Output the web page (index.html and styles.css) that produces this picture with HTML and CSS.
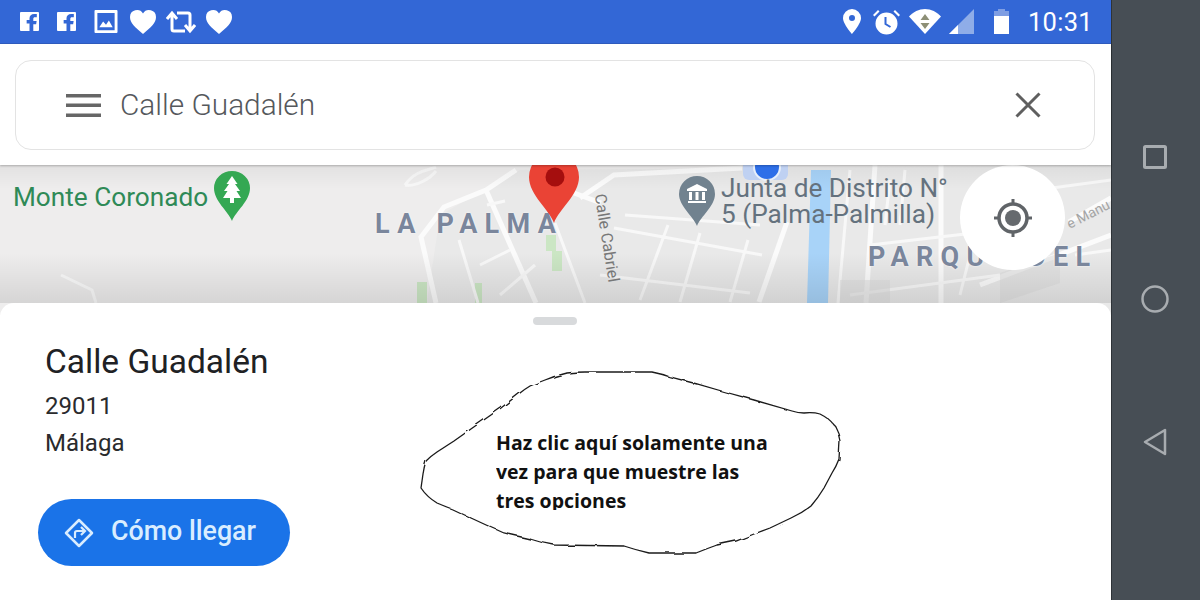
FILE: index.html
```html
<!DOCTYPE html>
<html lang="es">
<head>
<meta charset="utf-8">
<title>Calle Guadalén</title>
<link rel="stylesheet" href="styles.css">
</head>
<body>
<div class="screen">
  <main class="phone">
    <header class="status">
      <div class="status-group left">
        <svg class="i19" viewBox="0 0 20 20"><path fill="#fff" d="M1 0h18a1 1 0 0 1 1 1v18a1 1 0 0 1-1 1h-5v-7h3l.5-3.5H14V7c0-1 .5-1.6 1.7-1.6h2V2.2C17 2.1 16 2 14.800 2 12 2 10 3.700 10 6.600v1.900H7V12h3v8H1a1 1 0 0 1-1-1V1a1 1 0 0 1 1-1z"/></svg>
        <svg class="i19 gap17" viewBox="0 0 20 20"><path fill="#fff" d="M1 0h18a1 1 0 0 1 1 1v18a1 1 0 0 1-1 1h-5v-7h3l.5-3.5H14V7c0-1 .5-1.6 1.7-1.6h2V2.2C17 2.1 16 2 14.800 2 12 2 10 3.700 10 6.600v1.900H7V12h3v8H1a1 1 0 0 1-1-1V1a1 1 0 0 1 1-1z"/></svg>
        <svg class="i24 gap17" viewBox="0 0 24 24"><path fill="#fff" fill-rule="evenodd" d="M1 0h22a1 1 0 0 1 1 1v22a1 1 0 0 1-1 1H1a1 1 0 0 1-1-1V1a1 1 0 0 1 1-1zm2 3v18h18V3H3zm2 15 4-6 3 3.500 3-4.500 4 7H5z"/></svg>
        <svg class="heart gap12" viewBox="0 0 26 24"><path fill="#fff" d="M13 24C5 17 0 13 0 7a7 7 0 0 1 13-3.500A7 7 0 0 1 26 7c0 6-5 10-13 17z"/></svg>
        <svg class="retweet gap9" viewBox="0 0 30 24" fill="none" stroke="#fff" stroke-width="3"><path d="M6 4v15a2 2 0 0 0 2 2h11M1 9l5-6 5 6"/><path d="M24 20V5a2 2 0 0 0-2-2H11M29 15l-5 6-5-6"/></svg>
        <svg class="heart gap9" viewBox="0 0 26 24"><path fill="#fff" d="M13 24C5 17 0 13 0 7a7 7 0 0 1 13-3.500A7 7 0 0 1 26 7c0 6-5 10-13 17z"/></svg>
      </div>
      <div class="status-group right">
        <svg class="st-pin" viewBox="0 0 18 25"><path fill="#fff" fill-rule="evenodd" d="M9 0a9 9 0 0 1 9 9c0 6-9 16-9 16S0 15 0 9a9 9 0 0 1 9-9zm0 6a3 3 0 1 0 0 6 3 3 0 0 0 0-6z"/></svg>
        <svg class="st-alarm" viewBox="0 0 27 26"><path fill="#fff" d="M13.500 3.500a11 11 0 1 1 0 22 11 11 0 0 1 0-22zM0 6l5-5 1.500 1.500-5 5zM27 6l-5-5-1.500 1.500 5 5z"/><path fill="none" stroke="#3367d6" stroke-width="2" d="M12.500 8v7l5 3"/></svg>
        <svg class="st-wifi" viewBox="0 0 32 25"><path fill="#fff" d="M16 25 0 7.500C4 3 10 0 16 0s12 3 16 7.500z"/><path fill="#8d8f76" d="M16 5l4.500 6h-9zM16 20l-4.500-6h9z"/></svg>
        <svg class="st-signal" viewBox="0 0 25 25"><path fill="#8fade8" d="M25 0v25H0z"/><path fill="#fff" d="M9 16v9H0z"/></svg>
        <svg class="st-battery" viewBox="0 0 15 25"><path fill="#7f9ee3" d="M4 0h7v2h4v6H0V2h4z"/><path fill="#fff" d="M0 7h15v18H0z"/></svg>
        <span class="clock">10:31</span>
      </div>
    </header>

    <div class="search-wrap">
      <div class="search">
        <svg class="menu" viewBox="0 0 35 23"><path fill="#666" d="M0 0h35v3.500H0zM0 9.500h35V13H0zM0 19.500h35V23H0z"/></svg>
        <span class="query">Calle Guadalén</span>
        <svg class="close" viewBox="0 0 26 26"><path fill="none" stroke="#5f5f5f" stroke-width="3" d="M1.500 1.500l23 23M24.500 1.500l-23 23"/></svg>
      </div>
    </div>

    <section class="map">
      <svg class="roads" viewBox="0 0 1111 150" preserveAspectRatio="none">
        <rect x="0" y="0" width="1111" height="150" fill="#eeeded"/>
        <path fill="#e9e9e9" d="M440 50 520 5 1111 0v150H425z"/>
        <g fill="#cbe6c4">
          <rect x="546" y="70" width="10" height="16"/>
          <rect x="552" y="86" width="10" height="20"/>
          <rect x="417" y="117" width="10" height="21"/>
          <rect x="475" y="118" width="7" height="20"/>
        </g>
        <path fill="#a8d3f8" d="M811 5h20l-3 133h-21z"/>
        <g fill="none" stroke="#fbfbfb" stroke-width="5">
          <path d="M516 5 486 25 444 42 421 72 436 138"/>
          <path d="M486 25 536 138"/>
          <path d="M574 28 601 38"/>
          <path d="M580 33 614 10 742 3"/>
          <path d="M787 57 759 137"/>
          <path d="M941 0V138M875 0 866 138"/>
          <path d="M1069 57 1111 33M980 120 1111 70"/>
        </g>
        <g fill="none" stroke="#f8f8f8" stroke-width="3">
          <path d="M405 20C415 5 430 5 436 2M405 20C415 22 430 14 436 6"/>
          <path d="M459 75 478 138M555 58 585 138"/>
          <path d="M480 100 510 85M500 130 535 100M487 40 505 36"/>
          <path d="M61 110 92 125 96 138" stroke="#fafafa"/>
          <path d="M614 63 762 90M625 50 760 60M640 135 668 60M680 137 700 68M730 137 748 75M600 110 750 128"/>
          <path d="M850 5 838 138M870 80 1000 65M850 130 1000 110M890 15 885 60M1000 30 1111 15M1075 90 1111 85M905 5 900 60M960 130 975 70"/>
        </g>
        <path fill="#dcdcdc" opacity=".5" d="M840 115h50v23h-50zM1000 108l60-20v30l-60 20z"/>
      </svg>
      <div class="fade-top"></div>
      <div class="fade-bottom"></div>

      <span class="dot-halo"></span>
      <span class="dot"></span>

      <span class="label park">Monte Coronado</span>
      <svg class="marker tree" viewBox="0 0 36 50">
        <path fill="#34a853" d="M18 50C14 40 0 30 0 17a18 17 0 0 1 36 0C36 30 22 40 18 50z"/>
        <path fill="#fff" d="M18 5l5.500 8H21l5 7h-3.500l4.500 7H20v5h-4v-5H9l4.500-7H10l5-7h-2.500z"/>
      </svg>
      <span class="label district la-palma">LA PALMA</span>
      <svg class="marker pin" viewBox="0 0 50 58">
        <path fill="#ea4335" d="M25 58C20 44 0 30 0 12A25 25 0 0 1 50 12C50 30 30 44 25 58z"/>
        <circle cx="26" cy="12" r="9.500" fill="#a50e0e"/>
      </svg>
      <span class="label street cabriel">Calle Cabriel</span>
      <svg class="marker civic" viewBox="0 0 36 50">
        <path fill="#71828f" d="M18 50C14 40 0 30 0 18a18 18 0 0 1 36 0C36 30 22 40 18 50z"/>
        <path fill="#fff" d="M18 8l10 5v2H8v-2zM9 25h18v2H9zM10 16h3v8h-3zM16.500 16h3v8h-3zM23 16h3v8h-3z"/>
      </svg>
      <span class="label poi">Junta de Distrito N°<br>5 (Palma-Palmilla)</span>
      <span class="label street manuel">e Manu</span>
      <span class="label district parque">PARQUE DEL</span>

      <button class="locate" type="button" aria-label="Mi ubicación">
        <svg viewBox="0 0 40 40"><circle cx="20" cy="20" r="14" fill="none" stroke="#606468" stroke-width="3.500"/><circle cx="20" cy="20" r="8" fill="#666a6e"/><path stroke="#606468" stroke-width="3" d="M20 1v6M20 33v6M1 20h6M33 20h6"/></svg>
      </button>
    </section>

    <section class="sheet">
      <span class="handle"></span>
      <h1 class="title">Calle Guadalén</h1>
      <p class="line">29011</p>
      <p class="line">Málaga</p>
      <button class="directions" type="button">
        <svg viewBox="0 0 30 30"><path fill="none" stroke="#d9edff" stroke-width="2.500" stroke-linejoin="round" d="M15 2 28 15 15 28 2 15z"/><path fill="none" stroke="#d9edff" stroke-width="2.200" d="M11 20v-5a2 2 0 0 1 2-2h7M17 9l4 4-4 4"/></svg>
        <span class="directions-text">Cómo llegar</span>
      </button>
      <svg class="scribble" viewBox="0 0 430 190">
        <defs>
          <filter id="wobble" x="-5%" y="-5%" width="110%" height="110%">
            <feTurbulence type="fractalNoise" baseFrequency="0.06" numOctaves="2" seed="4"/>
            <feDisplacementMap in="SourceGraphic" scale="3.500"/>
          </filter>
        </defs>
        <path filter="url(#wobble)" fill="none" stroke="#1a1a1a" stroke-width="1.300" d="M147 2Q155 1 165 1H232Q242 3 250 6L277 13 305 21 334 29 372 40Q378 42 384 42 393 41 400 43 410 48 415 55 419 62 420 70L419 88Q416 96 412 102L404 117Q398 127 391 135 382 142 371 147L350 157 334 163 316 170 297 174Q286 178 276 182H229Q216 179 204 175L134 174Q122 172 110 168L84 162Q68 155 51 147L32 138Q24 135 17 132 7 126 1 117L3 103Q4 96 6 90 11 85 17 81L34 70 58 53 81 37 100 22Q105 18 110 15 117 12 125 9 135 5 147 2z"/>
      </svg>
      <p class="note">Haz clic aquí solamente una<br>vez para que muestre las<br>tres opciones</p>
    </section>
  </main>
  <nav class="navbar">
    <svg class="nav-square" viewBox="0 0 24 24"><rect x="1.500" y="1.500" width="21" height="21" rx="1" fill="none" stroke="#a8acb0" stroke-width="3"/></svg>
    <svg class="nav-circle" viewBox="0 0 28 28"><circle cx="14" cy="14" r="12.500" fill="none" stroke="#a8acb0" stroke-width="2.500"/></svg>
    <svg class="nav-back" viewBox="0 0 24 28"><path fill="none" stroke="#a8acb0" stroke-width="2.500" stroke-linejoin="round" d="M22 2v24L2 14z"/></svg>
  </nav>
</div>
</body>
</html>
```

FILE: styles.css
```css
* { box-sizing: border-box; }
html, body { margin: 0; padding: 0; }
body { width: 1200px; height: 600px; overflow: hidden; background: #fff; font-family: Roboto, "Liberation Sans", sans-serif; }
.screen { display: flex; width: 1200px; height: 600px; }
.phone { width: 1111px; display: flex; flex-direction: column; background: #fff; }

.status { height: 44px; flex: none; background: #3367d6; display: flex; justify-content: space-between; align-items: center; padding: 0 18px 0 20px; border-bottom: 1px solid #2f5cbf; }
.status-group { display: flex; align-items: center; }
.i19 { width: 19px; height: 19px; }
.i24 { width: 24px; height: 23px; }
.heart { width: 26px; height: 24px; }
.retweet { width: 30px; height: 24px; }
.gap17 { margin-left: 18px; }
.gap12 { margin-left: 12px; }
.gap9 { margin-left: 10px; }
.st-pin { width: 18px; height: 25px; margin-right: 12px; }
.st-alarm { width: 27px; height: 26px; margin-right: 9px; }
.st-wifi { width: 32px; height: 25px; margin-right: 8px; }
.st-signal { width: 25px; height: 25px; margin-right: 20px; }
.st-battery { width: 15px; height: 25px; margin-right: 19px; }
.clock { color: #fff; font-size: 25.500px; line-height: 30px; letter-spacing: .3px; }

.search-wrap { height: 121px; flex: none; padding: 16px 16px 15px 15px; background: #fff; position: relative; z-index: 2; box-shadow: 0 1px 2px rgba(0,0,0,.25); }
.search { height: 90px; border: 1px solid #e3e3e3; border-radius: 16px; display: flex; align-items: center; padding: 0 53px 0 50px; }
.menu { width: 35px; height: 23px; flex: none; }
.query { margin: -2px 0 0 19px; flex: 1; font-size: 29.800px; font-weight: 300; color: #55585c; }
.close { width: 26px; height: 26px; flex: none; }

.map { position: relative; height: 150px; flex: none; overflow: hidden; }
.roads { position: absolute; left: 0; top: 0; width: 1111px; height: 150px; filter: blur(.7px); }
.fade-top { position: absolute; left: 0; top: 0; width: 100%; height: 24px; background: linear-gradient(rgba(0,0,0,.05), rgba(0,0,0,0)); }
.fade-bottom { position: absolute; left: 0; top: 88px; width: 100%; height: 50px; background: linear-gradient(rgba(0,0,0,0), rgba(0,0,0,.1)); }
.dot-halo { position: absolute; left: 743px; top: 0; width: 45px; height: 15px; border-radius: 0 0 6px 6px; background: #bfd1f2; }
.dot { position: absolute; left: 753px; top: -12px; width: 28px; height: 28px; border-radius: 50%; background: #2e6fe8; border: 2px solid #e8f0fb; }
.label { position: absolute; white-space: nowrap; }
.park { left: 13px; top: 17px; font-size: 26.200px; line-height: 30px; color: #2f8a57; }
.district { font-size: 27px; font-weight: 700; letter-spacing: 7.300px; line-height: 30px; color: #7a869c; text-shadow: 0 0 2px #fff; }
.la-palma { left: 375px; top: 44px; }
.parque { left: 868px; top: 77px; }
.poi { left: 721px; top: 10px; font-size: 26.200px; line-height: 26px; color: #64727e; }
.street { color: #777; font-size: 16px; line-height: 18px; }
.cabriel { left: 562px; top: 64px; transform: rotate(81deg); }
.manuel { left: 1065px; top: 40px; font-size: 14px; transform: rotate(-27deg); color: #a5a5a5; }
.marker { position: absolute; }
.tree { left: 214px; top: 6px; width: 36px; height: 50px; }
.pin { left: 529px; top: 0; width: 50px; height: 58px; }
.civic { left: 679px; top: 11px; width: 36px; height: 50px; }
.locate { position: absolute; left: 960px; top: 0; width: 105px; height: 105px; border: 0; padding: 0; border-radius: 50%; background: #fff; display: flex; align-items: center; justify-content: center; }
.locate svg { width: 40px; height: 40px; }

.sheet { position: relative; z-index: 1; flex: 1; margin-top: -12px; background: #fff; border-radius: 14px 14px 0 0; padding: 41px 0 0 45px; display: flex; flex-direction: column; align-items: flex-start; }
.handle { position: absolute; left: 533px; top: 14px; width: 44px; height: 8px; border-radius: 4px; background: #d8dadc; }
.title { margin: 0 0 8px; font-size: 33.500px; font-weight: 400; line-height: 36px; color: #202124; }
.line { margin: 0; font-size: 24px; line-height: 37px; color: #2a2b2d; }
.directions { margin: 37px 0 0 -7px; width: 252px; height: 67px; border: 0; border-radius: 34px; background: #1a73e8; color: #d9edff; display: flex; align-items: center; padding: 0 0 0 26px; font-family: inherit; font-size: 26.800px; font-weight: 500; }
.directions svg { width: 30px; height: 30px; flex: none; margin-right: 17px; }
.directions-text { margin-top: -3px; }
.scribble { position: absolute; left: 420px; top: 68px; width: 430px; height: 190px; }
.note { position: absolute; left: 496px; top: 125px; margin: 0; height: 82px; overflow: hidden; font-family: "Open Sans", sans-serif; font-weight: 700; font-size: 19.500px; line-height: 29px; color: #111; white-space: nowrap; }

.navbar { flex: 1; position: relative; background: #474e55; border-left: 1px solid #2e3338; display: flex; flex-direction: column; align-items: center; padding: 145px 2px 0 0; }
.nav-square { width: 24px; height: 24px; }
.nav-circle { width: 28px; height: 28px; margin-top: 116px; }
.nav-back { width: 24px; height: 28px; margin-top: 115px; }
```
